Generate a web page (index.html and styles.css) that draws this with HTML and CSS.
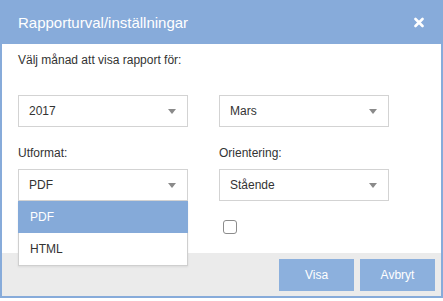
FILE: index.html
```html
<!DOCTYPE html>
<html lang="sv">
<head>
<meta charset="utf-8">
<title>Rapporturval</title>
<link rel="stylesheet" href="styles.css">
</head>
<body>
<div class="dialog">
  <div class="header">
    <span class="title">Rapporturval/inställningar</span>
    <svg class="close" width="10" height="11" viewBox="0 0 10 11"><path d="M1.5 2 L8.5 9 M8.5 2 L1.5 9" stroke="#fff" stroke-width="2.6" stroke-linecap="round"/></svg>
  </div>
  <div class="content">
    <p class="intro">Välj månad att visa rapport för:</p>
    <div class="grid">
      <div class="field">
        <div class="select"><span>2017</span><span class="arrow"></span></div>
      </div>
      <div class="field">
        <div class="select"><span>Mars</span><span class="arrow"></span></div>
      </div>
      <div class="field">
        <div class="label">Utformat:</div>
        <div class="select-wrap">
          <div class="select"><span>PDF</span><span class="arrow"></span></div>
          <ul class="menu">
            <li class="option active">PDF</li>
            <li class="option">HTML</li>
          </ul>
        </div>
      </div>
      <div class="field">
        <div class="label">Orientering:</div>
        <div class="select"><span>Stående</span><span class="arrow"></span></div>
      </div>
      <div class="field"></div>
      <div class="field">
        <span class="checkbox"></span>
      </div>
    </div>
  </div>
  <div class="footer">
    <button class="btn">Visa</button>
    <button class="btn">Avbryt</button>
  </div>
</div>
</body>
</html>
```

FILE: styles.css
```css
html, body {
  margin: 0;
  padding: 0;
  background: #ffffff;
}
body {
  font-family: "Liberation Sans", Arial, sans-serif;
  font-size: 12px;
  color: #333333;
}
.dialog {
  width: 443px;
  height: 298px;
  box-sizing: border-box;
  border: 2px solid #87abda;
  border-top: 0;
  display: flex;
  flex-direction: column;
  background: #ffffff;
}
.header {
  height: 44px;
  flex: none;
  background: #87abda;
  display: flex;
  align-items: center;
  justify-content: space-between;
  margin: 0 -2px;
  padding: 0 19px 0 18px;
}
.title {
  color: #ffffff;
  font-size: 15px;
  line-height: 17px;
}
.close {
  display: block;
  margin-top: 1px;
}
.content {
  flex: 1;
  padding: 9px 16px 0 16px;
}
.intro {
  margin: 0 0 28px 0;
  line-height: 14px;
}
.grid {
  display: grid;
  grid-template-columns: 170px 170px;
  column-gap: 31px;
  row-gap: 19px;
}
.label {
  line-height: 14px;
  margin-bottom: 9px;
}
.select-wrap {
  position: relative;
}
.select {
  height: 32px;
  box-sizing: border-box;
  border: 1px solid #d3d3d3;
  background: #ffffff;
  display: flex;
  align-items: center;
  justify-content: space-between;
  padding: 0 11px 0 10px;
}
.arrow {
  width: 0;
  height: 0;
  border-left: 4.5px solid transparent;
  border-right: 4.5px solid transparent;
  border-top: 5px solid #8a8a8a;
}
.menu {
  position: absolute;
  left: 0;
  right: 0;
  top: 100%;
  margin: 0;
  padding: 0;
  list-style: none;
  background: #ffffff;
  border: 1px solid #cfcfcf;
  border-top: 0;
  box-shadow: 0 1px 2px rgba(0,0,0,0.08);
  z-index: 2;
}
.option {
  height: 32px;
  line-height: 32px;
  padding-left: 11px;
}
.option.active {
  background: #85aad9;
  color: #ffffff;
  margin: 0 -1px;
  padding-left: 12px;
}
.checkbox {
  display: block;
  width: 14px;
  height: 14px;
  box-sizing: border-box;
  border: 1px solid #8c8c8c;
  border-radius: 3px;
  margin-left: 4px;
  background: #ffffff;
}
.footer {
  height: 43px;
  flex: none;
  box-sizing: border-box;
  background: #ebebeb;
  display: flex;
  justify-content: flex-end;
  gap: 6px;
  padding: 6px 6px 0 0;
}
.btn {
  width: 75px;
  height: 32px;
  border: 0;
  margin: 0;
  background: #8cb0dd;
  color: #ffffff;
  font-family: "Liberation Sans", Arial, sans-serif;
  font-size: 12px;
  padding: 0;
}
```
